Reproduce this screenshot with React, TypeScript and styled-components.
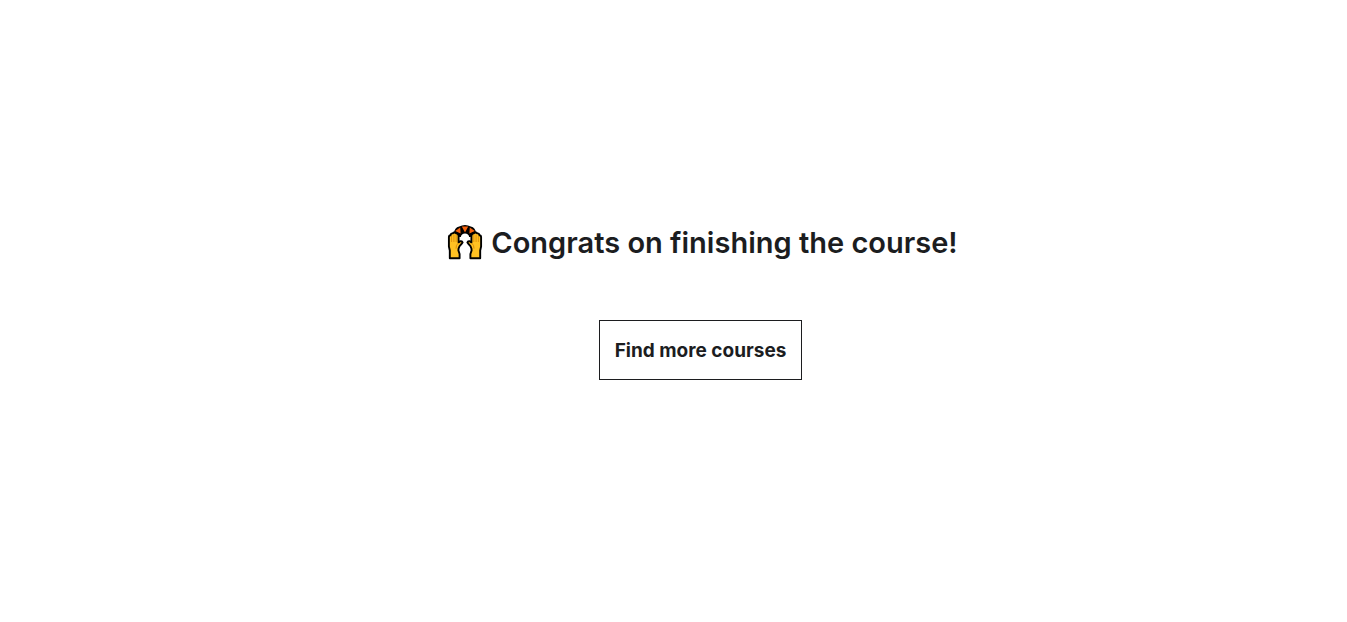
import React from 'react';
import styled, { createGlobalStyle } from 'styled-components';

const GlobalStyle = createGlobalStyle`
  * { box-sizing: border-box; }
  body { margin: 0; background: #fff; color: #1c1d1f; font-family: Inter, "Liberation Sans", sans-serif; }
`;

const Page = styled.main`
  min-height: 100vh;
  padding: 0 0 20px 54px;
  display: flex;
  flex-direction: column;
  align-items: center;
  justify-content: center;
  gap: 58px;
`;

const Heading = styled.h1`
  display: flex;
  align-items: center;
  gap: 8px;
  margin: 0;
  padding-left: 4px;
  font-size: 29px;
  font-weight: 600;
  line-height: 38px;
`;

const HeadingText = styled.span`
  padding-top: 2px;
`;

const Hands = styled.svg`
  width: 36px;
  height: 36px;
  flex: none;
`;

const CoursesButton = styled.button`
  height: 60px;
  padding: 2px 15px 0;
  border: 1px solid #1c1d1f;
  background: #fff;
  color: inherit;
  font-family: inherit;
  font-size: 19px;
  font-weight: 700;
  line-height: 24px;
  cursor: pointer;
`;

function Hand() {
  return (
    <>
      <path
        d="M2.8 34.2V26.5L1.9 22.5V13.2Q1.9 11.2 3.6 11.2Q3.8 9 5.8 9.4Q7.2 7.6 8.8 9.2Q11.4 9.2 11.6 11.6V18.4L13.4 17.2Q15.2 16.8 15.6 18.4L14 20.6Q12.2 22 11.6 24.4L11.4 26.4L12.6 30V34.2Z"
        fill="#ffc122"
        stroke="#000"
        strokeWidth="1.9"
        strokeLinejoin="round"
      />
      <path d="M4.6 12V18M6.9 10.6V18M9.2 10.6V18" stroke="#dc8c0c" strokeWidth="0.9" fill="none" />
      <path d="M11.4 19Q8.8 21 9 24.6" stroke="#dc8c0c" strokeWidth="1" fill="none" />
    </>
  );
}

function RaisedHands() {
  return (
    <Hands viewBox="0 0 36 36" role="img" aria-label="Raising hands">
      <path
        d="M7 9.6Q7.4 3.4 12.2 2.6Q18 -0.4 23.8 2.6Q28.6 3.4 29 9.6L23.6 13H22.2Q21.6 9.8 18 9.6Q14.4 9.8 13.8 13H12.4Z"
        fill="#000"
      />
      <path d="M8.2 7L13.2 3.6L13.6 9.6Z" fill="#f7630c" />
      <path d="M14.8 2.6H21.2L18 8.4Z" fill="#f7630c" />
      <path d="M27.8 7L22.8 3.6L22.4 9.6Z" fill="#f7630c" />
      <Hand />
      <g transform="translate(36 0) scale(-1 1)">
        <Hand />
      </g>
    </Hands>
  );
}

export default function App() {
  return (
    <>
      <GlobalStyle />
      <Page>
        <Heading>
          <RaisedHands />
          <HeadingText>Congrats on finishing the course!</HeadingText>
        </Heading>
        <CoursesButton type="button">Find more courses</CoursesButton>
      </Page>
    </>
  );
}
